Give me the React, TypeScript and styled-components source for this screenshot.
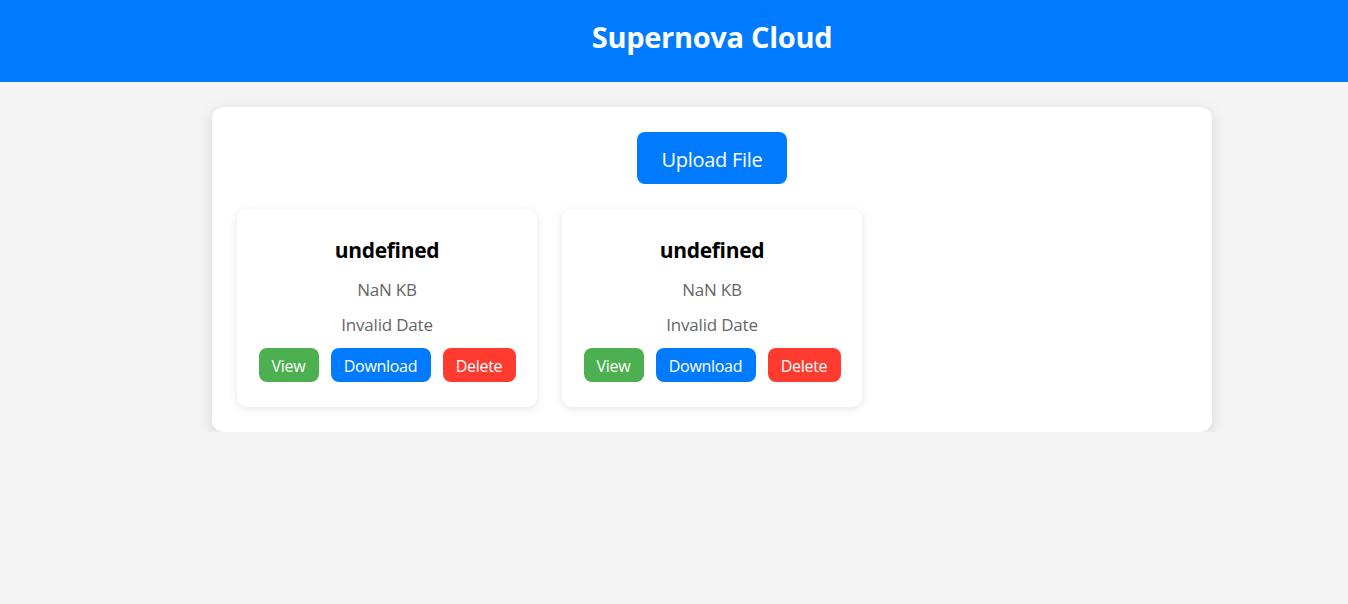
import React from "react";
import styled, { createGlobalStyle } from "styled-components";

const Global = createGlobalStyle`
  html, body { margin: 0; padding: 0; }
  body {
    background: #f4f4f4;
    font-family: "Open Sans", "Noto Sans", sans-serif;
  }
`;

const Header = styled.header`
  background: #007bff;
  height: 82px;
  box-sizing: border-box;
  padding: 0 0 10px 76px;
  display: flex;
  align-items: center;
  justify-content: center;
`;

const Title = styled.h1`
  margin: 0;
  color: #fff;
  font-size: 29px;
  font-weight: 700;
  letter-spacing: -0.3px;
`;

const Main = styled.main`
  display: flex;
  justify-content: center;
  padding: 25px 0 0 76px;
`;

const Container = styled.section`
  width: 1000px;
  box-sizing: border-box;
  background: #fff;
  border-radius: 12px;
  box-shadow: 0 4px 16px rgba(0, 0, 0, 0.12);
  padding: 25px;
  display: flex;
  flex-direction: column;
  align-items: center;
  gap: 25px;
`;

const UploadButton = styled.button`
  width: 150px;
  height: 52px;
  padding: 3px 0 0;
  background: #007bff;
  color: #fff;
  border: none;
  border-radius: 8px;
  font-family: inherit;
  font-size: 20px;
  letter-spacing: -0.3px;
  cursor: pointer;
`;

const Grid = styled.div`
  align-self: stretch;
  display: flex;
  gap: 25px;
`;

const Card = styled.div`
  width: 300px;
  height: 198px;
  box-sizing: border-box;
  background: #fff;
  border-radius: 10px;
  box-shadow: 0 2px 10px rgba(0, 0, 0, 0.1);
  padding-top: 27px;
  display: flex;
  flex-direction: column;
  align-items: center;
`;

const FileName = styled.h3`
  margin: 0;
  font-size: 21px;
  font-weight: 700;
  color: #000;
  line-height: 28px;
  letter-spacing: -0.3px;
`;

const Meta = styled.p<{ $top: number }>`
  margin: ${(p) => p.$top}px 0 0;
  color: #666;
  font-size: 17px;
  line-height: 22px;
  letter-spacing: -0.2px;
`;

const Actions = styled.div`
  margin-top: 12px;
  display: flex;
  gap: 12px;
`;

const ActionButton = styled.button<{ $bg: string; $w: number }>`
  width: ${(p) => p.$w}px;
  height: 34px;
  border: none;
  border-radius: 8px;
  background: ${(p) => p.$bg};
  color: #fff;
  font-family: inherit;
  font-size: 16px;
  letter-spacing: -0.3px;
  padding: 2px 0 0;
  cursor: pointer;
`;

const files = [0, 1];

export default function App() {
  return (
    <>
      <Global />
      <Header>
        <Title>Supernova Cloud</Title>
      </Header>
      <Main>
        <Container>
          <UploadButton>Upload File</UploadButton>
          <Grid>
            {files.map((i) => (
              <Card key={i}>
                <FileName>undefined</FileName>
                <Meta $top={15}>NaN KB</Meta>
                <Meta $top={13}>Invalid Date</Meta>
                <Actions>
                  <ActionButton $bg="#4caf50" $w={60}>View</ActionButton>
                  <ActionButton $bg="#007bff" $w={100}>Download</ActionButton>
                  <ActionButton $bg="#ff3b30" $w={73}>Delete</ActionButton>
                </Actions>
              </Card>
            ))}
          </Grid>
        </Container>
      </Main>
    </>
  );
}
